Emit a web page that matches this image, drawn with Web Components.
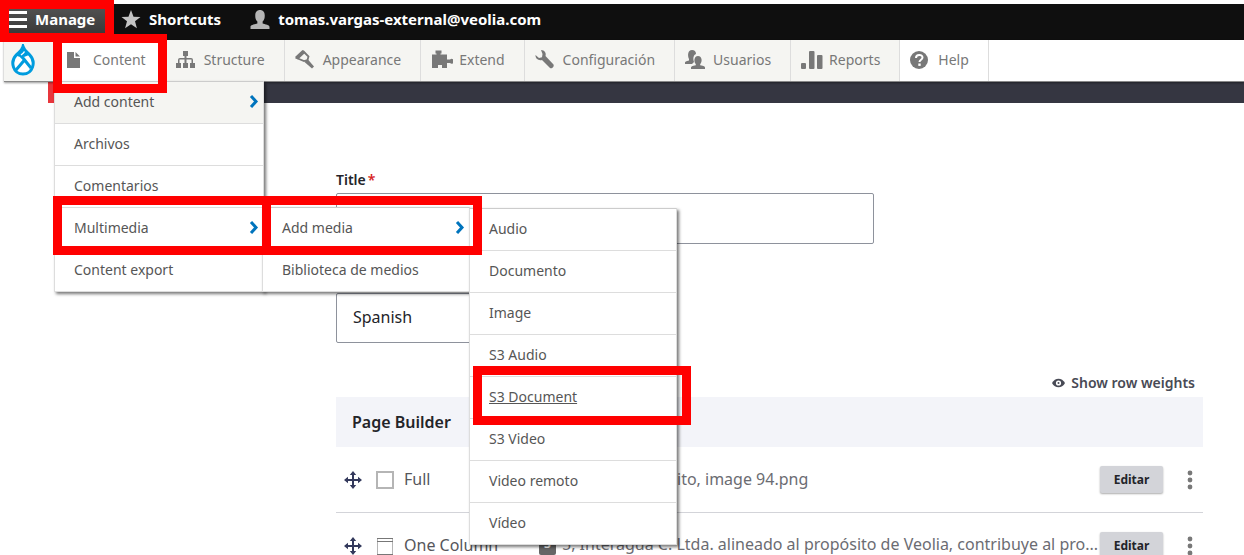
<!DOCTYPE html>
<html lang="es">
<head>
<meta charset="utf-8">
<title>Page Builder</title>
<style>
html, body { margin: 0; height: 100%; }
body { background: #fff; overflow: hidden; font: 14px/20px "Noto Sans", sans-serif; color: #232429; }
</style>
</head>
<body>
<admin-app></admin-app>
<script>
const ICONS = {
  bars: '<path d="M0 1h18v3H0zM0 8h18v3H0zM0 15h18v3H0z" fill="#fff"/>',
  star: '<path d="M9 0l2.4 6.300 6.600.3-5.200 4.100 1.800 6.500L9 13.500 3.400 17.200l1.800-6.500L0 6.600l6.600-.3z" fill="#c4c4c4"/>',
  person: '<path d="M0 18v-2c0-1.200 1.500-2 6.500-3.200V11C4.800 9.500 4.500 7.500 4.500 5c0-3 1.700-5 4.500-5s4.500 2 4.500 5c0 2.500-.3 4.500-2 6v1.800C16.500 14 18 14.800 18 16v2z" fill="#b5b5b5"/>',
  file: '<path d="M2 1h7v6h6v10H2z"/><path d="M10.500 1L15 5.500h-4.500z"/>',
  tree: '<path d="M7 1h5v5h-1.500v2H15a2 2 0 0 1 2 2v3h2v5h-5v-5h1.500v-3.500h-5V13H12v5H7v-5h1.500V9.500h-5V13H5v5H0v-5h2v-3a2 2 0 0 1 2-2h4.500V6H7z"/>',
  brush: '<path d="M8.500 1.500l5 5-1 3.500-3.500 1L1.500 8z" fill="none" stroke="#787878" stroke-width="1.800"/><path d="M7.500 0l3 2.500-7.500 7-3-2.500z"/><path d="M12.500 9l6.500 7.500-2 2L9.500 12z"/>',
  puzzle: '<path d="M5.500 4.500V3.500H4.500V.5h6v3h-1v1H16v5h3a2.400 2.400 0 1 1 0 3.500h-3v5h-5v-3H7v3H1V4.500z"/>',
  wrench: '<path d="M6 0c3.500 0 5.500 3 4.500 6l8 8.500c1 2-1.500 4.500-3.500 3.500L7 10C3.500 11 .2 8.500.5 5L4 8l3-.8L7.500 4z"/>',
  users: '<path d="M0 14v-1.500c0-.8 1-1.300 4-2V9C2.500 6 2.500 0 7 0c2.500 0 4 1.500 4 4-2.500 1-3.300 4-2 8l-2 2z"/><path d="M6 19v-1.500c0-1 1-1.500 4.800-2.300V14C8.800 12.500 8.500 6 13 6s4.300 6.500 2.200 8v1.200c3.800.8 4.800 1.300 4.800 2.300V19z"/>',
  chart: '<rect x="0" y="12" width="5" height="6" rx="1"/><rect x="8" y="0" width="5.500" height="18" rx="1"/><rect x="16" y="4" width="5.500" height="14" rx="1"/>',
  help: '<circle cx="9" cy="9" r="9"/><path d="M6 7c0-4 6.500-4 6.500-.5 0 2.200-3 2.200-3 4.500" fill="none" stroke="#fff" stroke-width="2"/><rect x="8.300" y="12.500" width="2.400" height="2.400" fill="#fff"/>',
  drop: '<path d="M13 2.500c1.200 4 4 5.700 6.800 8.500 6.500 7 3 19-6.800 19S-.3 18 6.200 11C9 8 12 6.500 13 2.500z" fill="#fff" stroke="#009cde" stroke-width="3"/><path d="M7 10.500c3 0 4.500 1.500 6 3.500l8 10M14.500 16L6 26" fill="none" stroke="#009cde" stroke-width="3"/><path d="M13 3l6 8-5 2-6-3z" fill="#009cde"/><path d="M11 11c2-1.500 3-2.500 3.500-3.500" stroke="#fff" stroke-width="1.500" fill="none"/>',
  move: '<path d="M9 0l3.200 4H10v4h4V5.800L18 9l-4 3.200V10h-4v4h2.200L9 18l-3.200-4H8v-4H4v2.200L0 9l4-3.200V8h4V4H5.800z" fill="#33395c"/>',
  eye: '<path d="M0 5C3-.8 10-.8 13 5c-3 5.800-10 5.800-13 0z" fill="#484a55"/><circle cx="6.500" cy="5" r="2.600" fill="#fff"/><circle cx="6.500" cy="5" r="1" fill="#484a55"/>',
  dots: '<circle cx="3" cy="3" r="2.400"/><circle cx="3" cy="10" r="2.400"/><circle cx="3" cy="17" r="2.400"/>',
  full: '<rect x="1" y="1" width="16" height="16" fill="#fff" stroke="#b5b5b5" stroke-width="2"/>',
  column: '<rect x="1.500" y="1.500" width="15" height="16" fill="#fff" stroke="#b5b5b5"/><path d="M1 1.500h16M1 4.500h16M1 17.500h16" stroke="#777" stroke-width="1"/>',
  chevron: '<path d="M2 1l5 5.500L2 12" fill="none" stroke="#0074bd" stroke-width="3"/>'
};

function register(name, markup, setup) {
  const template = document.createElement('template');
  template.innerHTML = markup;
  customElements.define(name, class extends HTMLElement {
    connectedCallback() {
      if (this.shadowRoot) return;
      this.attachShadow({ mode: 'open' }).append(template.content.cloneNode(true));
      if (setup) setup(this, this.shadowRoot);
    }
  });
}

register('ui-icon', `<style>
:host { display: inline-flex; flex: none; }
svg { display: block; flex: none; fill: #787878; }
</style><svg aria-hidden="true"></svg>`, (host, root) => {
  const [w, h] = (host.getAttribute('box') || '18 18').split(' ');
  const svg = root.querySelector('svg');
  svg.setAttribute('width', host.getAttribute('w') || w);
  svg.setAttribute('height', host.getAttribute('h') || h);
  svg.setAttribute('viewBox', '0 0 ' + w + ' ' + h);
  svg.innerHTML = ICONS[host.getAttribute('name')];
});

/* Red frame laid over the element that holds it */
register('red-frame', `<style>
:host { position: absolute; z-index: 9; inset: var(--frame-inset, 0); border: 9px solid #f00; box-sizing: border-box; pointer-events: none; }
</style>`);

register('top-bar', `<style>
:host { display: flex; height: 36px; background: #0f0f0f; font: 700 15px/20px "Noto Sans", sans-serif; }
a { position: relative; display: flex; align-items: center; color: #fff; text-decoration: none; gap: 8px; padding: 0 19px 0 10px; height: 30px; }
a.on { box-sizing: border-box; padding: 0 5px; width: 106px; margin-right: 1px; background: linear-gradient(#555, #333); height: 36px; padding-bottom: 6px; --frame-inset: -4px -4px -2px -4px; }
</style>
<a class="on" href="#"><ui-icon name="bars" w="18" h="18"></ui-icon><span>Manage</span><red-frame></red-frame></a>
<a href="#"><ui-icon name="star" w="20" h="19"></ui-icon><span>Shortcuts</span></a>
<a href="#"><ui-icon name="person" w="20" h="19"></ui-icon><span>tomas.vargas-external@veolia.com</span></a>`);

register('menu-item', `<style>
:host { display: block; position: relative; box-sizing: border-box; height: 42px; border-bottom: 1px solid #ddd; background: #fff; --frame-inset: var(--item-frame); }
:host([shade]) { background: #f5f5f2; }
:host(:last-child) { border-bottom: 0; height: 41px; }
a { display: flex; height: 41px; box-sizing: border-box; align-items: center; justify-content: space-between; padding: 0 4px 2px 19px; color: #565656; text-decoration: none; }
:host([active]) a { text-decoration: underline; }
</style><a href="#"><slot></slot></a><slot name="sub"></slot>`);

register('menu-list', `<style>
:host { position: absolute; z-index: 2; top: var(--menu-top, 100%); left: var(--menu-left, 0); width: var(--menu-width, 208px); border: 1px solid #ddd; border-top-color: #ccc; background: #fff; box-shadow: 2px 2px 3px #0008; }
</style><slot></slot>`);

register('tray-tab', `<style>
:host { display: block; position: relative; border-right: 1px solid #ddd; background: #f5f5f2; }
:host([open]) { background: #fff; }
:host([plain]) { background: #fff; }
a { display: flex; height: 100%; box-sizing: border-box; align-items: center; gap: 10px; padding: 0 19px 2px 10px; color: #787878; text-decoration: none; }
ui-icon { width: 18px; }
</style><a href="#"><ui-icon></ui-icon><slot></slot></a><slot name="sub"></slot>`, (host, root) => {
  const icon = document.createElement('ui-icon');
  for (const key of ['name', 'box', 'w', 'h']) {
    if (host.hasAttribute(key)) icon.setAttribute(key, host.getAttribute(key));
  }
  root.querySelector('ui-icon').replaceWith(icon);
});

register('admin-tray', `<style>
:host { display: flex; position: relative; z-index: 3; height: 41px; border-bottom: 1px solid #888; background: #fff; box-shadow: 0 1px 2px #0006; }
.home { display: flex; align-items: center; padding: 0 19px 0 6px; background: #f5f5f2; }
.content-menu { --menu-left: -1px; --menu-top: 41px; }
.level2 { --menu-left: 207px; --menu-top: -1px; --menu-width: 206px; }
.level3 { --menu-left: 206px; --menu-top: 0px; }
.first { --frame-inset: -6px -2px -12px -2px; }
.media { --item-frame: -12px -8px -6px -2px; }
.add { --item-frame: -12px -13px -6px -1px; }
.doc { --item-frame: -11px -15px -7px 3px; }
</style>
<a class="home" href="#" aria-label="Drupal"><ui-icon name="drop" box="26 33"></ui-icon></a>
<tray-tab open class="first" name="file">Content
  <red-frame slot="sub"></red-frame>
  <menu-list slot="sub" class="content-menu">
    <menu-item shade>Add content<ui-icon name="chevron" box="10 13"></ui-icon></menu-item>
    <menu-item>Archivos</menu-item>
    <menu-item>Comentarios</menu-item>
    <menu-item class="media">Multimedia<ui-icon name="chevron" box="10 13"></ui-icon>
      <red-frame slot="sub"></red-frame>
      <menu-list slot="sub" class="level2">
        <menu-item class="add">Add media<ui-icon name="chevron" box="10 13"></ui-icon>
          <menu-list slot="sub" class="level3">
            <menu-item>Audio</menu-item>
            <menu-item>Documento</menu-item>
            <menu-item>Image</menu-item>
            <menu-item>S3 Audio</menu-item>
            <menu-item active class="doc">S3 Document<red-frame slot="sub"></red-frame></menu-item>
            <menu-item>S3 Video</menu-item>
            <menu-item>Video remoto</menu-item>
            <menu-item>Vídeo</menu-item>
          </menu-list>
          <red-frame slot="sub"></red-frame>
        </menu-item>
        <menu-item>Biblioteca de medios</menu-item>
      </menu-list>
    </menu-item>
    <menu-item>Content export</menu-item>
  </menu-list>
</tray-tab>
<tray-tab name="tree" box="20 19">Structure</tray-tab>
<tray-tab name="brush" box="20 19">Appearance</tray-tab>
<tray-tab name="puzzle" box="22 19">Extend</tray-tab>
<tray-tab name="wrench" box="20 19">Configuración</tray-tab>
<tray-tab name="users" box="20 20">Usuarios</tray-tab>
<tray-tab name="chart" box="22 18">Reports</tray-tab>
<tray-tab plain name="help">Help</tray-tab>`);

register('builder-row', `<style>
:host { display: flex; align-items: center; height: 65px; border-bottom: 1px solid #d3d4d9; font-size: 16px; line-height: 24px; color: #55565b; padding: 0 5px 0 8px; }
.kind { display: flex; align-items: center; gap: 10px; width: 195px; flex: none; }
.kind ui-icon { margin-right: 4px; }
::slotted(span) { padding-bottom: 2px; }
.desc { flex: 1; min-width: 0; display: flex; align-items: center; gap: 6px; padding-bottom: 2px; white-space: nowrap; color: #6b6c72; }
:host([inset]) .desc { padding-left: 138px; }
button { font: 700 12px/16px "Noto Sans", sans-serif; color: #232429; background: #d3d4d9; border: 0; border-radius: 2px; width: 63px; height: 27px; padding: 0; box-shadow: 0 1px 2px #0005; }
.more { display: flex; justify-content: center; background: none; box-shadow: none; width: 16px; margin-left: 19px; align-items: center; }
</style>
<div class="kind"><ui-icon name="move"></ui-icon><slot name="icon"></slot><slot name="kind"></slot></div>
<div class="desc"><slot></slot></div>
<button type="button">Editar</button>
<button type="button" class="more" aria-label="Más"><ui-icon name="dots" box="6 20"></ui-icon></button>`);

register('page-form', `<style>
:host { display: block; padding: 67px 41px 0 332px; }
label { display: block; font: 600 14px/20px "Noto Sans", sans-serif; }
em { color: #d72222; font-style: normal; margin-left: 2px; }
input, select { display: block; box-sizing: border-box; border: 1px solid #8e929c; border-radius: 2px; background: #fff; color: #232429; font: 16px/24px "Noto Sans", sans-serif; appearance: none; margin: 0; padding: 0 16px; }
input { width: 62%; height: 51px; margin-top: 3px; }
select { width: 200px; height: 50px; margin-top: 49px; padding-bottom: 2px; }
.weights { display: flex; justify-content: flex-end; align-items: center; margin: 30px 8px 4px 0; }
.weights button { display: flex; align-items: center; gap: 6px; border: 0; padding: 0; background: none; font: 600 14px/20px "Noto Sans", sans-serif; color: #484a55; }
h2 { margin: 0; height: 50px; box-sizing: border-box; padding: 13px 16px; font: 600 16px/24px "Noto Sans", sans-serif; background: #f3f4f9; }
.badge { display: inline-block; width: 17px; height: 18px; border-radius: 2px; background: #666; color: #fff; font: 700 12px/18px "Noto Sans", sans-serif; text-align: center; }
</style>
<form>
<label for="title">Title<em>*</em></label>
<input id="title" type="text">
<select aria-label="Idioma"><option>Spanish</option></select>
<div class="weights"><button type="button"><ui-icon name="eye" box="13 10"></ui-icon>Show row weights</button></div>
<h2>Page Builder</h2>
<builder-row inset><ui-icon slot="icon" name="full"></ui-icon><span slot="kind">Full</span>ito, image 94.png</builder-row>
<builder-row><ui-icon slot="icon" name="column"></ui-icon><span slot="kind">One Column</span><span class="badge">3</span><span>5, Interagua C. Ltda. alineado al propósito de Veolia, contribuye al pro...</span></builder-row>
</form>`);

register('admin-app', `<style>
:host { display: block; padding: 4px 0 0 4px; height: 100%; box-sizing: border-box; overflow: hidden; }
.band { height: 21px; margin-left: 44px; background: linear-gradient(90deg, #e8363c 12px, #353641 12px); }
</style>
<top-bar></top-bar>
<admin-tray></admin-tray>
<div class="band"></div>
<page-form></page-form>`);
</script>
</body>
</html>
